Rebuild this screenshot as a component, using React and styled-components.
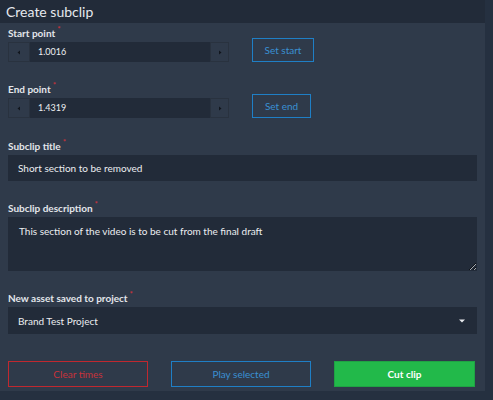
import React from "react";
import styled, { createGlobalStyle } from "styled-components";

const Global = createGlobalStyle`
  html, body { margin: 0; padding: 0; background: #253040; }
  body { font-family: Lato, "Open Sans", sans-serif; width: 493px; height: 400px; overflow: hidden; }
  * { box-sizing: border-box; }
`;

const Frame = styled.div`
  width: 485px;
  height: 391px;
  display: flex;
  flex-direction: column;
  background: #2f3a4a;
`;

const Header = styled.div`
  height: 23px;
  background: #222b39;
  color: #e6e9ee;
  font-size: 14px;
  line-height: 23px;
  padding-left: 6px;
  flex-shrink: 0;
`;

const Body = styled.div`
  padding: 4px 8px 0 8px;
  display: flex;
  flex-direction: column;
`;

const Field = styled.div`
  display: flex;
  flex-direction: column;
  margin-bottom: ${(p) => p.$mb || 0}px;
`;

const Spacer = styled.div`
  height: ${(p) => p.$h}px;
`;

const Label = styled.label`
  color: #e3e6ea;
  font-size: 10px;
  font-weight: 700;
  line-height: 12px;
  height: 15px;
  display: flex;
  align-items: flex-start;
`;

const Star = styled.span`
  color: #c8323a;
  font-size: 8px;
  line-height: 8px;
  margin-left: 2px;
  margin-top: -2px;
`;

const Row = styled.div`
  display: flex;
  align-items: flex-end;
  gap: 23px;
`;

const Spinner = styled.div`
  display: flex;
  width: 221px;
  height: 20px;
`;

const SpinBtn = styled.div`
  width: ${(p) => p.$w}px;
  height: 20px;
  border: 1px solid #29323f;
  display: flex;
  align-items: center;
  justify-content: center;
`;

const SpinValue = styled.div`
  flex: 1;
  background: #222b39;
  color: #eef0f2;
  font-size: 9px;
  line-height: 20px;
  padding-left: 8px;
`;

const Outline = styled.button`
  height: 24px;
  width: ${(p) => p.$w}px;
  background: transparent;
  border: 1px solid ${(p) => p.$c};
  color: ${(p) => p.$t};
  font-family: Lato, sans-serif;
  font-size: 10px;
  padding: 0;
  margin: 0;
`;

const TextBox = styled.div`
  background: #222b39;
  color: #eceef1;
  font-size: 10px;
  height: ${(p) => p.$h}px;
  width: 469px;
  padding: 0 10px;
  display: flex;
  align-items: center;
  justify-content: space-between;
`;

const Area = styled.textarea`
  background: #222b39;
  color: #eceef1;
  font-family: Lato, sans-serif;
  font-size: 10px;
  height: 54px;
  width: 469px;
  border: none;
  outline: none;
  padding: 8px 11px;
  margin: 0;
  display: block;
  resize: vertical;
`;

const Actions = styled.div`
  display: flex;
  gap: 23px;
  margin-top: 27px;
`;

const ActionBtn = styled.button`
  width: ${(p) => p.$w}px;
  height: 26px;
  background: ${(p) => p.$bg || "transparent"};
  border: 1px solid ${(p) => p.$c};
  color: ${(p) => p.$t};
  font-family: Lato, sans-serif;
  font-size: 10px;
  font-weight: ${(p) => (p.$bold ? 700 : 400)};
  padding: 0;
`;

const Tri = ({ dir }) => (
  <svg width="4" height="5" viewBox="0 0 4 5">
    {dir === "left" ? (
      <path d="M3 0.5 L0.5 2.5 L3 4.5 Z" fill="#11161d" />
    ) : (
      <path d="M1 0.5 L3.5 2.5 L1 4.5 Z" fill="#11161d" />
    )}
  </svg>
);

const Caret = () => (
  <svg width="6" height="4" viewBox="0 0 6 4" style={{ marginRight: 2 }}>
    <path d="M0 0.5 H6 L3 3.5 Z" fill="#e8eaee" />
  </svg>
);

const Req = ({ children }) => (
  <Label>
    {children}
    <Star>*</Star>
  </Label>
);

function NumberRow({ label, value, btn, w }) {
  return (
    <Row>
      <div>
        <Req>{label}</Req>
        <Spinner>
          <SpinBtn $w={22}>
            <Tri dir="left" />
          </SpinBtn>
          <SpinValue>{value}</SpinValue>
          <SpinBtn $w={19}>
            <Tri dir="right" />
          </SpinBtn>
        </Spinner>
      </div>
      <Outline $w={w} $c="#1f7fc6" $t="#3a90d2">
        {btn}
      </Outline>
    </Row>
  );
}

export default function App() {
  return (
    <>
      <Global />
      <Frame>
        <Header>Create subclip</Header>
        <Body>
          <NumberRow label="Start point" value="1.0016" btn="Set start" w={62} />
          <Spacer $h={21} />
          <NumberRow label="End point" value="1.4319" btn="Set end" w={59} />
          <Spacer $h={22} />
          <Field $mb={21}>
            <Req>Subclip title</Req>
            <TextBox $h={26}>Short section to be removed</TextBox>
          </Field>
          <Field $mb={21}>
            <Req>Subclip description</Req>
            <Area readOnly value="This section of the video is to be cut from the final draft" />
          </Field>
          <Field>
            <Req>New asset saved to project</Req>
            <TextBox $h={27}>
              <span>Brand Test Project</span>
              <Caret />
            </TextBox>
          </Field>
          <Actions>
            <ActionBtn $w={140} $c="#c0282f" $t="#c8323a">Clear times</ActionBtn>
            <ActionBtn $w={140} $c="#1f7fc6" $t="#3a90d2">Play selected</ActionBtn>
            <ActionBtn $w={141} $c="#1fa344" $bg="#22b94a" $t="#ffffff" $bold>Cut clip</ActionBtn>
          </Actions>
        </Body>
      </Frame>
    </>
  );
}
